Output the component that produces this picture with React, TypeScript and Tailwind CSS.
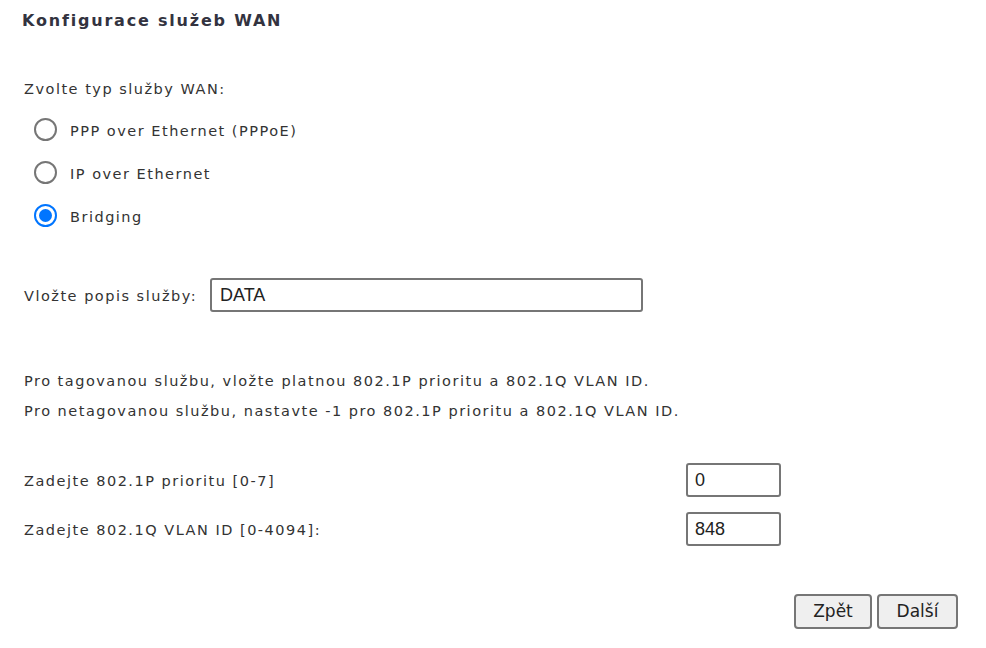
import React from 'react';

const App: React.FC = () => {
    const inputFont = { fontFamily: '"Liberation Sans", Arial, sans-serif' };
    return (
        <div className="min-h-[648px] w-[986px] bg-white text-[#333] text-[14.5px] tracking-[1.5px] font-['DejaVu_Sans',Verdana,sans-serif]">
            <div className="pl-[24px] pt-[10px]">
                <h1 className="text-[16px] font-bold text-[#333340] leading-[22px] tracking-[1.8px] -ml-[2px]">Konfigurace služeb WAN</h1>

                {/* typ sluzby */}
                <div className="mt-[48px] leading-[18px]">Zvolte typ služby WAN:</div>
                <div className="mt-[22px] flex flex-col gap-[19px] pl-[10px]">
                    {['PPP over Ethernet (PPPoE)', 'IP over Ethernet', 'Bridging'].map((label, i) => (
                        <label key={label} className="flex items-center gap-[13px] h-[24px]">
                            <span className={`w-[23px] h-[23px] -mt-[5px] rounded-full border-2 flex items-center justify-center ${i === 2 ? 'border-[#0075ff]' : 'border-[#767676]'}`}>
                                {i === 2 && <span className="w-[13px] h-[13px] rounded-full bg-[#0075ff]" />}
                            </span>
                            <span>{label}</span>
                        </label>
                    ))}
                </div>

                {/* popis */}
                <div className="mt-[48px] flex items-start">
                    <span className="w-[186px] mt-[8px]">Vložte popis služby:</span>
                    <div className="w-[433px] h-[34px] border-2 border-[#767676] rounded-[3px] px-[8px] flex items-center text-[18px] text-[#222] tracking-normal" style={inputFont}>DATA</div>
                </div>

                <div className="mt-[60px] flex flex-col gap-[12px] leading-[18px]">
                    <div>Pro tagovanou službu, vložte platnou 802.1P prioritu a 802.1Q VLAN ID.</div>
                    <div>Pro netagovanou službu, nastavte -1 pro 802.1P prioritu a 802.1Q VLAN ID.</div>
                </div>

                <div className="mt-[43px] w-[757px] flex flex-col gap-[15px]">
                    {[['Zadejte 802.1P prioritu [0-7]', '0'], ['Zadejte 802.1Q VLAN ID [0-4094]:', '848']].map(([label, val]) => (
                        <div key={label} className="flex items-center justify-between">
                            <span className="mt-[3px]">{label}</span>
                            <div className="w-[95px] h-[34px] border-2 border-[#767676] rounded-[3px] px-[7px] flex items-center text-[18px] text-[#222] tracking-normal" style={inputFont}>{val}</div>
                        </div>
                    ))}
                </div>

                <div className="mt-[48px] w-[934px] flex justify-end gap-[5px]">
                    <button className="w-[78px] h-[35px] border-2 border-[#767676] rounded-[4px] bg-[#efefef] text-[17px] text-[#222] tracking-normal">Zpět</button>
                    <button className="w-[81px] h-[35px] border-2 border-[#767676] rounded-[4px] bg-[#efefef] text-[17px] text-[#222] tracking-normal">Další</button>
                </div>
            </div>
        </div>
    );
};

export default App;
